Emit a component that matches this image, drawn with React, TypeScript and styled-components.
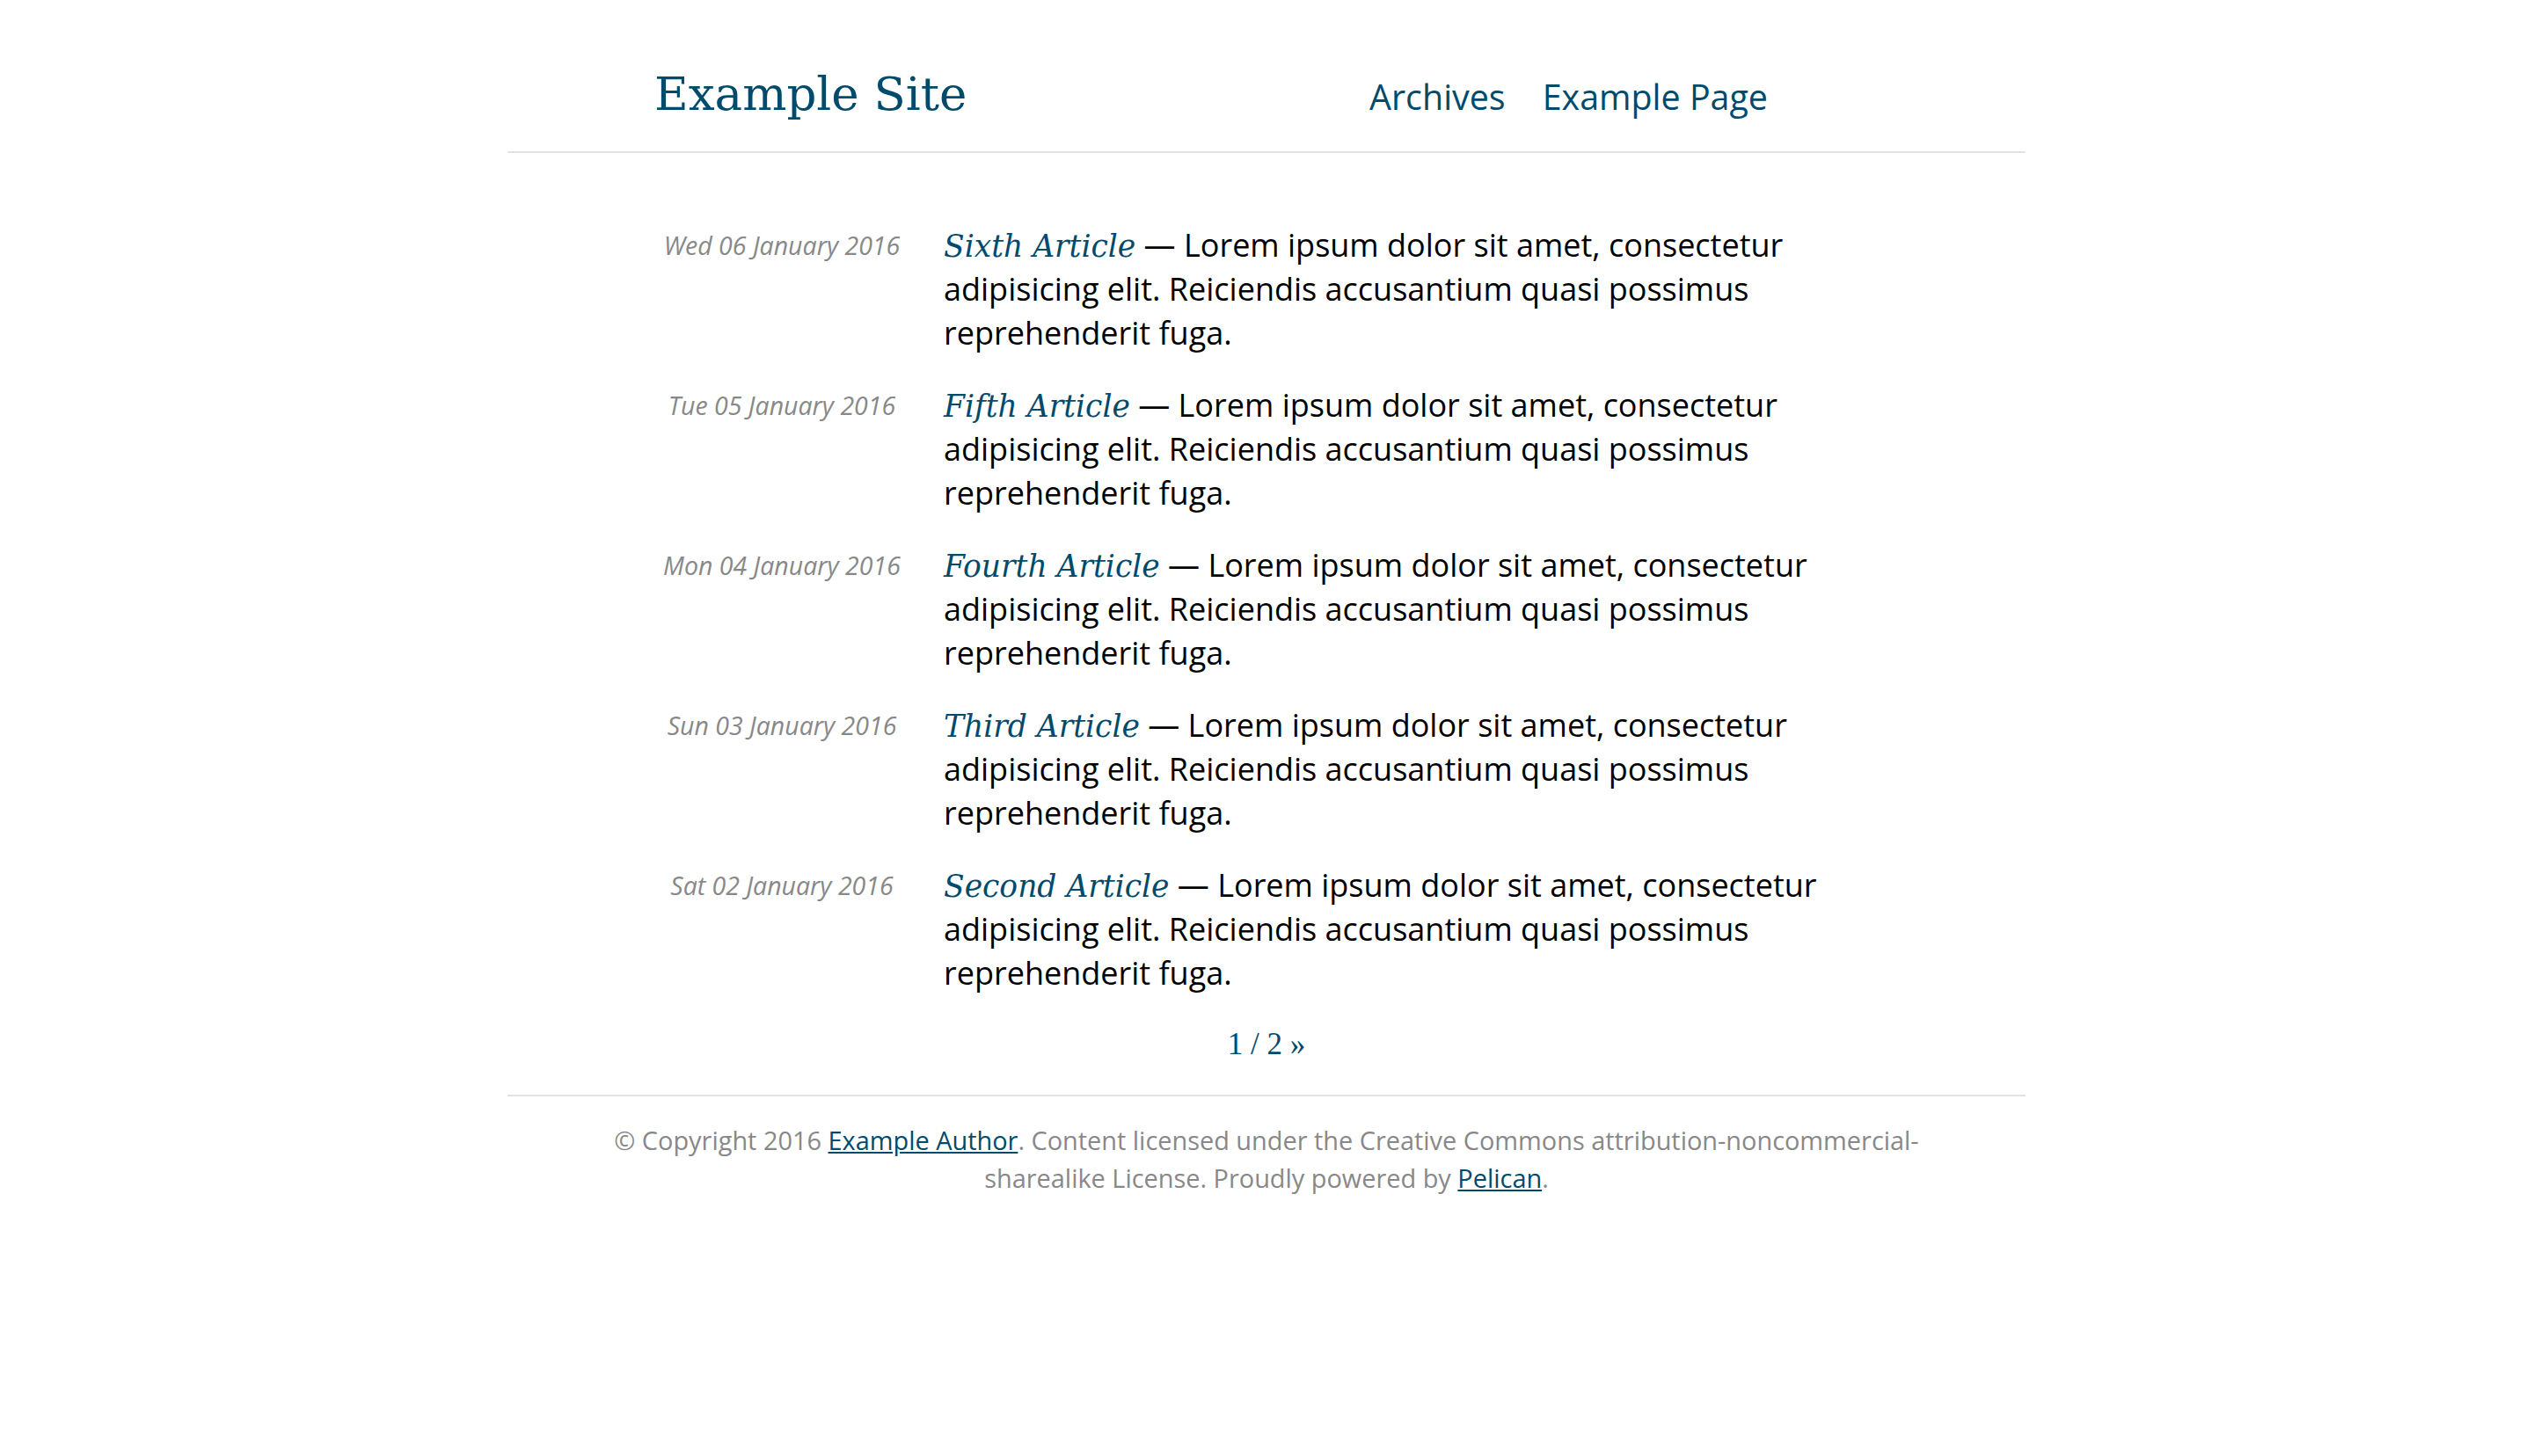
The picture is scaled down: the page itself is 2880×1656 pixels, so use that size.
import React from "react";
import styled, { createGlobalStyle } from "styled-components";

const Global = createGlobalStyle`
  html, body { margin: 0; padding: 0; background: #fff; }
  body { font-family: "Open Sans", "Noto Sans", sans-serif; color: #000; }
`;

const BLUE = "#004b6b";

const Page = styled.div`
  width: 1726px;
  margin: 0 auto;
`;

const Header = styled.header`
  display: flex;
  align-items: baseline;
  padding: 77px 293px 35px 167px;
  border-bottom: 2px solid #e2e2e2;
`;

const SiteTitle = styled.a`
  font-family: "DejaVu Serif", "Liberation Serif", serif;
  font-size: 53px;
  line-height: 60px;
  color: ${BLUE};
  text-decoration: none;
`;

const Nav = styled.nav`
  margin-left: auto;
  display: flex;
  gap: 42px;
`;

const NavLink = styled.a`
  font-size: 39.4px;
  color: ${BLUE};
  text-decoration: none;
`;

const Main = styled.main`
  padding: 80px 167px 0 167px;
  display: flex;
  flex-direction: column;
  gap: 32px;
`;

const Row = styled.article`
  display: grid;
  grid-template-columns: 290px 1fr;
  column-gap: 39px;
`;

const DateCell = styled.div`
  font-style: italic;
  font-size: 28.5px;
  line-height: 50px;
  color: #888;
  text-align: center;
`;

const Body = styled.p`
  margin: 0;
  font-size: 36px;
  line-height: 50px;
  color: #000;
`;

const ArticleLink = styled.a`
  font-family: "DejaVu Serif", "Liberation Serif", serif;
  font-style: italic;
  font-size: 34.5px;
  line-height: 1;
  color: ${BLUE};
  text-decoration: none;
`;

const Pager = styled.div`
  text-align: center;
  font-family: "Liberation Serif", "Times New Roman", serif;
  font-size: 35px;
  line-height: 50px;
  color: ${BLUE};
  padding: 31px 0 32px;
`;

const Footer = styled.footer`
  border-top: 2px solid #e2e2e2;
  padding: 28px 100px;
  text-align: center;
  font-size: 28.9px;
  line-height: 43px;
  color: #888;
`;

const FootLink = styled.a`
  color: ${BLUE};
  text-decoration: underline;
`;

const articles = [
  { date: "Wed 06 January 2016", title: "Sixth Article" },
  { date: "Tue 05 January 2016", title: "Fifth Article" },
  { date: "Mon 04 January 2016", title: "Fourth Article" },
  { date: "Sun 03 January 2016", title: "Third Article" },
  { date: "Sat 02 January 2016", title: "Second Article" },
];

const LOREM =
  "Lorem ipsum dolor sit amet, consectetur adipisicing elit. Reiciendis accusantium quasi possimus reprehenderit fuga.";

export default function App() {
  return (
    <>
      <Global />
      <Page>
        <Header>
          <SiteTitle href="#">Example Site</SiteTitle>
          <Nav>
            <NavLink href="#">Archives</NavLink>
            <NavLink href="#">Example Page</NavLink>
          </Nav>
        </Header>
        <Main>
          {articles.map((a) => (
            <Row key={a.title}>
              <DateCell>{a.date}</DateCell>
              <Body>
                <ArticleLink href="#">{a.title}</ArticleLink> — {LOREM}
              </Body>
            </Row>
          ))}
        </Main>
        <Pager>1 / 2 »</Pager>
        <Footer>
          © Copyright 2016 <FootLink href="#">Example Author</FootLink>. Content licensed under the
          Creative Commons attribution-noncommercial-sharealike License. Proudly powered by{" "}
          <FootLink href="#">Pelican</FootLink>.
        </Footer>
      </Page>
    </>
  );
}
